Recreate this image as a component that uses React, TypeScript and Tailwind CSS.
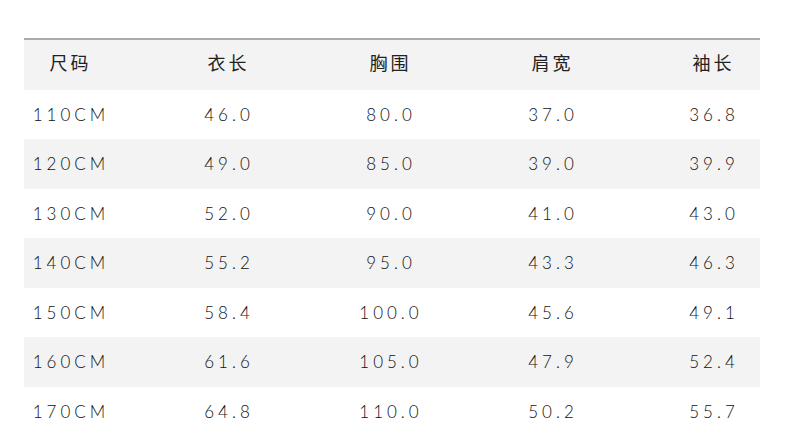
import React from 'react';

const rows = [
  ['110CM', '46.0', '80.0', '37.0', '36.8'],
  ['120CM', '49.0', '85.0', '39.0', '39.9'],
  ['130CM', '52.0', '90.0', '41.0', '43.0'],
  ['140CM', '55.2', '95.0', '43.3', '46.3'],
  ['150CM', '58.4', '100.0', '45.6', '49.1'],
  ['160CM', '61.6', '105.0', '47.9', '52.4'],
  ['170CM', '64.8', '110.0', '50.2', '55.7'],
];

const headers = ['尺码', '衣长', '胸围', '肩宽', '袖长'];

const cols = 'grid grid-cols-[90px_226px_98px_226px_96px] items-center';

export default function App() {
  return (
    <div className="w-[790px] h-[427px] overflow-hidden bg-white pt-[38px] pl-[24px]">
      <div className="w-[736px] border-t-2 border-[#ababab]">
        <div
          className={`${cols} h-[49.5px] bg-[#f3f3f3] text-[18px] leading-none text-[#222] tracking-[3px]`}
          style={{ fontFamily: '"Noto Sans CJK SC", sans-serif' }}
        >
          {headers.map(h => (
            <div key={h} className="text-center pl-[3px] pb-[5px]">{h}</div>
          ))}
        </div>
        {rows.map((row, i) => (
          <div
            key={row[0]}
            className={`${cols} h-[49.5px] text-[17px] leading-none font-light text-[#111] tracking-[4px] ${i % 2 === 1 ? 'bg-[#f3f3f3]' : 'bg-white'}`}
            style={{ fontFamily: 'Lato, sans-serif' }}
          >
            {row.map((cell, j) => (
              <div key={j} className="text-center pl-[4px]">{cell}</div>
            ))}
          </div>
        ))}
      </div>
    </div>
  );
}
